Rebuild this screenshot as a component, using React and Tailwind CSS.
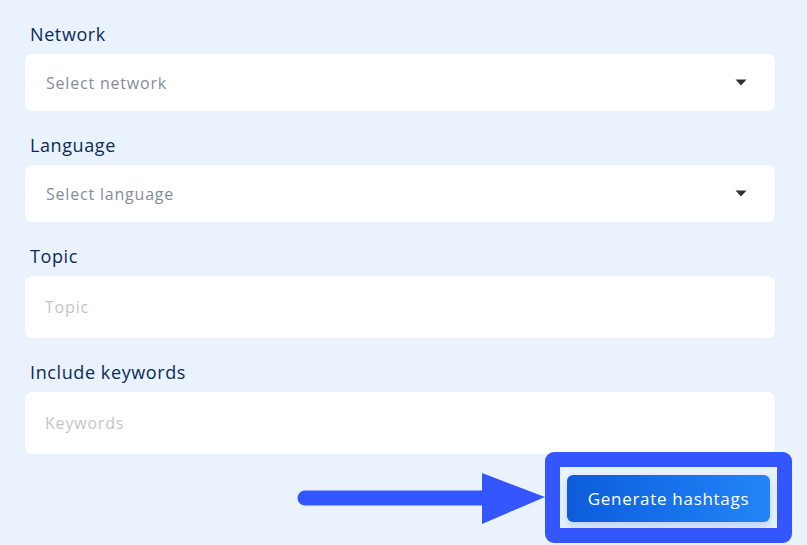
import React from 'react';

const font = { fontFamily: '"Open Sans", "Noto Sans", sans-serif' };

function Caret() {
  return (
    <svg width="12" height="7" viewBox="0 0 12 7" className="shrink-0">
      <path d="M0.5 0.5 L11.5 0.5 L6 6.5 Z" fill="#2f3136" />
    </svg>
  );
}

function Label({ children }) {
  return (
    <label className="block h-[24px] mb-[8px] pl-[5px] text-[18px] leading-[24px] tracking-[0.6px] text-[#0c2b57]">
      {children}
    </label>
  );
}

function SelectField({ placeholder }) {
  return (
    <div className="h-[57px] rounded-[7px] bg-white flex items-center justify-between pl-[21px] pr-[28px]">
      <span className="text-[16px] text-[#878b95] tracking-[0.8px]">{placeholder}</span>
      <Caret />
    </div>
  );
}

function TextField({ placeholder }) {
  return (
    <input
      type="text"
      placeholder={placeholder}
      className="w-full h-[62px] rounded-[7px] bg-white px-[20px] text-[16px] text-[#1f2937] placeholder:text-[#c3c5cb] outline-none tracking-[0.8px]"
      style={font}
    />
  );
}

export default function App() {
  return (
    <div className="w-full h-[545px] overflow-hidden bg-[#e9f2fd] pl-[25px] pr-[32px] pt-[22px]" style={font}>
      <Label>Network</Label>
      <SelectField placeholder="Select network" />

      <div className="mt-[22px]">
        <Label>Language</Label>
        <SelectField placeholder="Select language" />
      </div>

      <div className="mt-[22px]">
        <Label>Topic</Label>
        <TextField placeholder="Topic" />
      </div>

      <div className="mt-[22px]">
        <Label>Include keywords</Label>
        <TextField placeholder="Keywords" />
      </div>

      <div className="flex justify-end mt-[21px] pr-[5px]">
        <div className="relative">
          {/* annotation: highlight box */}
          <div className="absolute left-[-22px] right-[-22px] top-[-23px] bottom-[-21px] rounded-[9px] border-[15px] border-[#3456fe] pointer-events-none" />
          {/* annotation: arrow */}
          <svg
            className="absolute left-[-270px] top-[-2px] pointer-events-none"
            width="248"
            height="52"
            viewBox="0 0 248 52"
          >
            <line x1="8" y1="25" x2="195" y2="25" stroke="#3456fe" strokeWidth="15" strokeLinecap="round" />
            <path d="M185 0 L248 24 L185 51 Z" fill="#3456fe" />
          </svg>
          <button
            className="relative h-[47px] w-[203px] rounded-[6px] bg-gradient-to-r from-[#0d5cdb] to-[#2385f8] text-white text-[17px] font-medium tracking-[0.7px] shadow-[0_5px_8px_rgba(60,120,230,0.25)]"
            style={font}
          >
            Generate hashtags
          </button>
        </div>
      </div>
    </div>
  );
}
